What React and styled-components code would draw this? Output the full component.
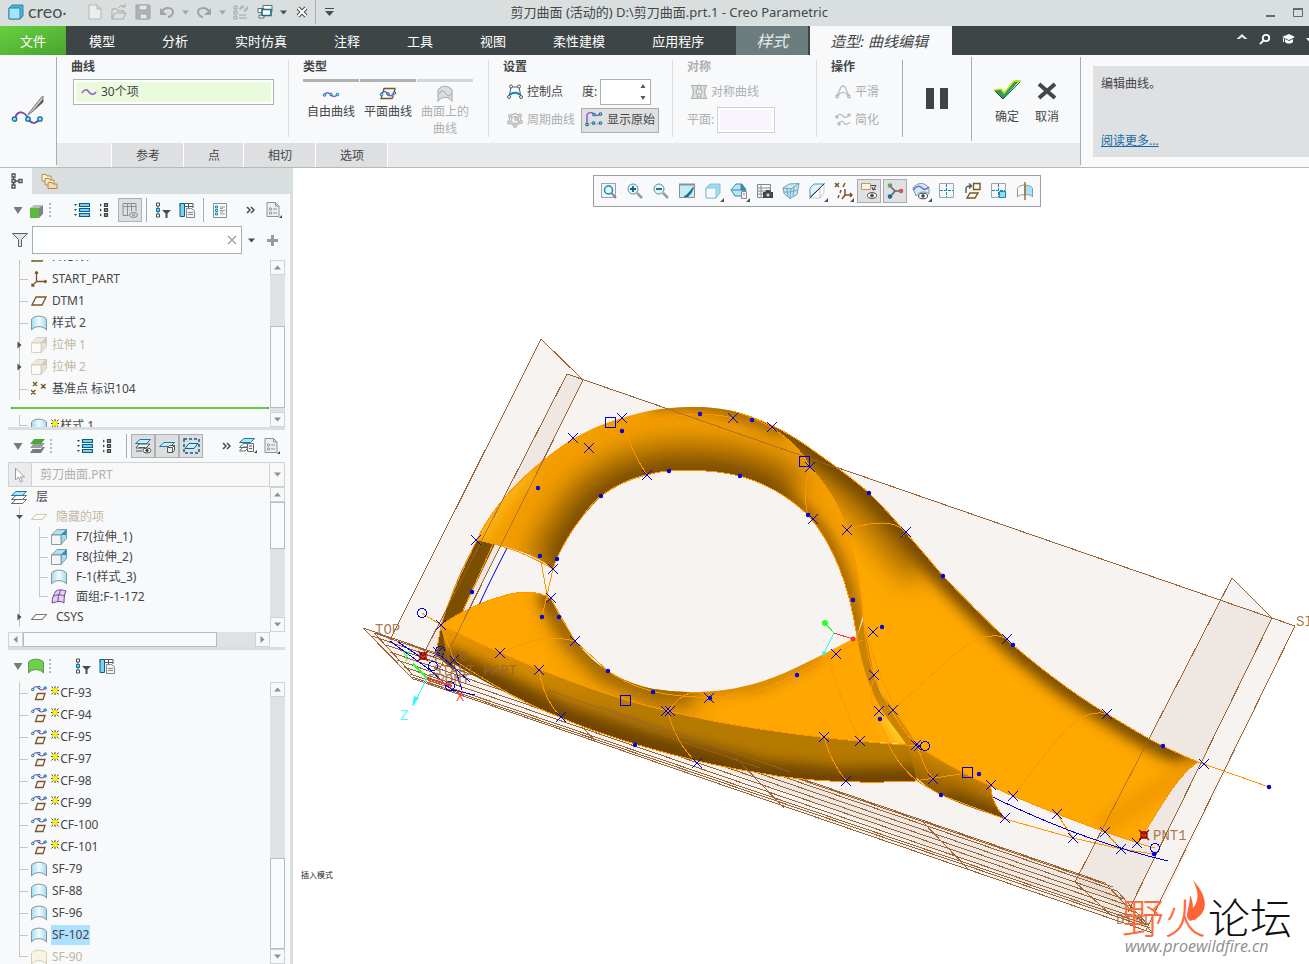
import React from "react";
import styled, { createGlobalStyle, css } from "styled-components";

const colors = {
  chrome: "#d9dfde",
  dark: "#3d4546",
  panel: "#f8f9fb",
  text: "#444648",
  muted: "#adafb0",
  hidden: "#c2b8a2",
  line: "#b4b8b8",
  guide: "#c4c6c8",
  datum: "#9a6434",
  orange: "#ff9600",
  blue: "#0000d8",
};

const GlobalStyle = createGlobalStyle`
  * {
    box-sizing: border-box;
  }
  body {
    margin: 0;
    overflow: hidden;
    background: #fff;
    color: ${colors.text};
    font: 12px/16px "Noto Sans", "Noto Sans CJK SC", sans-serif;
  }
  button, input, select {
    font: inherit;
    color: inherit;
    margin: 0;
    padding: 0;
    border: 0;
    background: none;
    border-radius: 0;
    outline: 0;
  }
  svg {
    display: block;
    flex: none;
  }
  ul {
    list-style: none;
    margin: 0;
    padding: 0;
  }
`;

/* ---------- layout ---------- */

const Page = styled.div`
  display: flex;
  flex-direction: column;
  height: 100vh;
`;

const TitleBar = styled.header`
  display: grid;
  grid-template-columns: 39% 1fr auto;
  align-items: center;
  height: 26px;
  background: ${colors.chrome};
`;

const QuickAccess = styled.div`
  display: flex;
  align-items: center;
  gap: 2px;
  height: 26px;
  padding-left: 8px;
  padding-bottom: 2px;
`;

const Brand = styled.span`
  width: 56px;
  padding: 0 2px 2px;
  font: 18px/22px Lato, sans-serif;
  color: #4a5052;
`;

const IconButton = styled.button`
  display: flex;
  align-items: center;
  justify-content: center;
  width: 22px;
  height: 24px;
`;

const DropButton = styled(IconButton)`
  width: 11px;
`;

const Divider = styled.i`
  width: 1px;
  height: ${(p) => p.$h || 24}px;
  background: #a9adad;
`;

const Title = styled.h1`
  margin: 0;
  padding-bottom: 2px;
  font-size: 13px;
  font-weight: 400;
`;

const WindowButtons = styled.div`
  display: flex;
  gap: 18px;
  padding: 0 6px 2px 0;
`;

const TabBar = styled.nav`
  display: flex;
  height: 29px;
  gap: 1px;
  background: ${colors.dark};
`;

const Tab = styled.button`
  padding: 0 23px;
  font-size: 13px;
  color: #fff;
  white-space: nowrap;
  ${(p) =>
    p.$kind === "file" &&
    css`
      padding: 0 20px;
      margin-right: -1px;
      background: linear-gradient(160deg, #66d13f, #4ba32f);
    `}
  ${(p) =>
    p.$kind === "context" &&
    css`
      margin-left: 8px;
      margin-right: 1px;
      padding: 0 20px;
      font-size: 16px;
      font-style: italic;
      color: #e4eaea;
      background: #6c7d7f;
    `}
  ${(p) =>
    p.$kind === "active" &&
    css`
      padding: 0 24px 0 20px;
      font-size: 15px;
      font-style: italic;
      color: ${colors.text};
      background: ${colors.panel};
    `}
`;

const TabTools = styled.div`
  display: flex;
  align-items: center;
  gap: 11px;
  height: 26px;
  margin-left: auto;
  margin-right: -4px;
`;

const Ribbon = styled.section`
  display: flex;
  height: 113px;
  background: ${colors.panel};
  border-bottom: 1px solid #b2bcbb;
`;

const FeatureMark = styled.div`
  display: flex;
  justify-content: center;
  align-items: center;
  width: 57px;
  margin: 2px 0;
  border-right: 1px solid #a9adad;
`;

const Dashboard = styled.div`
  display: flex;
  flex-direction: column;
`;

const Groups = styled.div`
  display: flex;
  height: 88px;
`;

const Group = styled.div`
  position: relative;
  width: ${(p) => p.$w}px;
  padding: 4px 0 0 14px;
  color: ${(p) => (p.$off ? colors.muted : colors.text)};
  &::after {
    content: "";
    position: absolute;
    right: 0;
    top: 5px;
    bottom: 6px;
    width: 1px;
    background: ${(p) => (p.$strong ? "#a9adad" : "#dcdee0")};
  }
`;

const GroupTitle = styled.h2`
  margin: 0 0 4px;
  font-size: 12px;
  line-height: 16px;
  font-weight: 700;
`;

const Collector = styled.button`
  display: flex;
  align-items: center;
  gap: 4px;
  width: 201px;
  height: 26px;
  margin-left: 2px;
  padding-left: 7px;
  border: 1px solid #b0b2b2;
  background: #e9fbdc;
  box-shadow: inset 0 0 0 2px #fff;
`;

const TypeRow = styled.div`
  display: flex;
  gap: 1px;
`;

const TypeButton = styled.button`
  display: flex;
  flex-direction: column;
  align-items: center;
  width: 56px;
  padding-top: 3px;
  line-height: 17px;
  white-space: nowrap;
  border-top: 3px solid ${(p) => (p.disabled ? "#d4d5d6" : "#b2b2b2")};
  color: ${(p) => (p.disabled ? colors.muted : colors.text)};
`;

const FieldRow = styled.div`
  display: flex;
  align-items: center;
  gap: 2px;
  height: 26px;
  margin-bottom: 2px;
  white-space: nowrap;
`;

const ToolButton = styled.button`
  display: flex;
  align-items: center;
  gap: 4px;
  height: 25px;
  padding: 0 3px;
  border: 1px solid ${(p) => (p.$on ? "#a9abad" : "transparent")};
  background: ${(p) => (p.$on ? "#dfe0e2" : "none")};
  color: ${(p) => (p.disabled ? colors.muted : colors.text)};
`;

const DegreeLabel = styled.label`
  display: flex;
  align-items: center;
  gap: 3px;
  margin-left: 13px;
`;

const Spinner = styled.span`
  display: flex;
  width: 51px;
  height: 26px;
  background: #fff;
  border: 1px solid #b0b2b2;
  input {
    width: 34px;
  }
`;

const PlaneLabel = styled.label`
  display: flex;
  align-items: center;
  gap: 3px;
  input {
    width: 58px;
    height: 26px;
    border: 1px solid #cfd0d2;
    background: #f9f5fd;
    box-shadow: inset 0 0 0 2px #fff;
  }
`;

const ActionCell = styled.div`
  display: flex;
  align-items: center;
  justify-content: center;
  gap: 14px;
  width: ${(p) => p.$w}px;
  margin: 2px 0;
  border-right: ${(p) => (p.$last ? 0 : "1px solid #a9adad")};
`;

const ActionButton = styled.button`
  display: flex;
  flex-direction: column;
  align-items: center;
  gap: 6px;
  padding-top: 6px;
`;

const SubTabs = styled.div`
  display: flex;
  gap: 1px;
  height: 24px;
  background: #e8e9eb;
`;

const SubTab = styled.button`
  width: ${(p) => p.$w}px;
  padding: 2px 0 0 1px;
  background: ${(p) => (p.$blank ? "#e8e9eb" : "#dedfe1")};
  box-shadow: 1px 0 #fff;
`;

const Help = styled.aside`
  flex: 1;
  display: flex;
  padding: 11px 0 10px 12px;
  &::before {
    content: "";
    width: 1px;
    margin: -9px 0 -8px -12px;
    background: #a9adad;
  }
`;

const HelpText = styled.div`
  flex: 1;
  display: flex;
  flex-direction: column;
  justify-content: space-between;
  margin-left: 12px;
  padding: 10px 8px 8px;
  background: #dfe0e2;
  a {
    color: #1568a8;
  }
`;

const Work = styled.div`
  display: flex;
  flex: 1;
  min-height: 0;
`;

const Sidebar = styled.aside`
  display: flex;
  flex-direction: column;
  width: 293px;
  flex: none;
  background: #f7fafb;
  border-right: 3px solid ${colors.chrome};
`;

const SideTabs = styled.div`
  display: flex;
  flex: none;
  height: 26px;
  background: ${colors.chrome};
`;

const SideTab = styled.button`
  display: flex;
  align-items: center;
  justify-content: center;
  width: 32px;
  padding-left: 2px;
  background: ${(p) => (p.$on ? "#f7fafb" : "none")};
`;

const SideTools = styled.div`
  display: flex;
  align-items: center;
  flex: none;
  height: 32px;
  padding-left: 13px;
`;

const SideTool = styled.button`
  display: flex;
  align-items: center;
  justify-content: center;
  width: ${(p) => p.$w || 24}px;
  height: 24px;
  margin-left: ${(p) => p.$gap || 0}px;
  border: ${(p) => (p.$on ? "1px solid #aeb0b2" : 0)};
  background: ${(p) => (p.$on ? "#dcdee0" : "none")};
  font-size: 16px;
`;

const Filter = styled.div`
  display: flex;
  align-items: center;
  height: 28px;
  flex: none;
  margin-bottom: 6px;
  padding-left: 12px;
  gap: 4px;
`;

const FilterBox = styled.div`
  display: flex;
  align-items: center;
  width: 210px;
  height: 28px;
  padding-right: 4px;
  border: 1px solid #a3afb1;
  background: #fff;
  input {
    flex: 1;
    min-width: 0;
  }
`;

const Section = styled.section`
  display: flex;
  flex: ${(p) => (p.$h ? `0 0 ${p.$h}px` : "1")};
  min-height: 0;
  margin: 0 5px 0 8px;
  background: ${colors.panel};
`;

const Tree = styled.ul`
  flex: 1;
  min-width: 0;
  overflow: hidden;
  margin-right: 1px;
`;

const TreeInner = styled.div`
  margin-top: ${(p) => -p.$scroll}px;
`;

const Row = styled.li`
  display: flex;
  align-items: center;
  height: ${(p) => p.$h || 22}px;
  padding-left: ${(p) => (p.$root ? 3 : 11)}px;
  white-space: nowrap;
  color: ${(p) => (p.$hidden ? colors.hidden : colors.text)};
`;

const Guide = styled.i`
  position: relative;
  width: ${(p) => p.$w || 12}px;
  height: ${(p) => (p.$end ? "50%" : "100%")};
  align-self: flex-start;
  border-left: 1px solid ${colors.guide};
  background: ${(p) =>
    p.$tick || p.$end
      ? `linear-gradient(${colors.guide}, ${colors.guide}) 0 ${p.$end ? "100%" : "50%"} / 8px 1px no-repeat`
      : "none"};
  svg {
    position: absolute;
    left: -5px;
    top: 50%;
    margin-top: -5px;
  }
`;

const Label = styled.span`
  margin-left: ${(p) => p.$gap || 4}px;
  padding: 2px 1px;
  background: ${(p) => (p.$selected ? "#aee0ff" : "none")};
`;

const FreshMark = styled.span`
  align-self: flex-start;
  padding: 4px 0 0 4px;
`;

const InsertLine = styled.li`
  display: flex;
  align-items: center;
  height: 15px;
  margin-left: 3px;
  &::before {
    content: "";
    flex: 1;
    height: 2px;
    background: #67c84a;
    border: solid #4fae33;
    border-width: 0 2px;
  }
`;

const ScrollTrack = styled.div`
  display: flex;
  flex-direction: ${(p) => (p.$horizontal ? "row" : "column")};
  ${(p) => (p.$horizontal ? "height: 15px; flex: 1;" : "width: 15px;")}
  flex-shrink: 0;
  background: #dfe1e3;
`;

const ScrollEnd = styled.button`
  display: flex;
  flex: 0 0 15px;
  align-items: center;
  justify-content: center;
  border: 1px solid #d0d2d4;
  background: #f7f8f9;
`;

const ScrollThumb = styled.i`
  border: 1px solid #b9bbbd;
  background: #f9fafb;
  flex: ${(p) => p.$size} 0 0;
`;

const ScrollGap = styled.i`
  flex: ${(p) => p.$size} 0 0;
`;

const Splitter = styled.hr`
  width: 277px;
  height: 3px;
  flex: none;
  margin: 0 0 0 8px;
  border: 0;
  background: ${colors.chrome};
`;

const ModelPicker = styled.div`
  display: flex;
  flex: none;
  height: 25px;
  margin: 0 5px 0 8px;
  border: 1px solid #cfd1d3;
  background: #f8f8f9;
`;

const PickArrow = styled.button`
  display: flex;
  align-items: center;
  justify-content: center;
  width: 23px;
  background: #eaebed;
  border-right: 1px solid #cfd1d3;
`;

const PickerSelect = styled.select`
  flex: 1;
  appearance: none;
  padding-left: 8px;
  color: ${colors.muted};
  opacity: 1;
`;

const PickCaret = styled.span`
  display: flex;
  align-items: center;
  justify-content: center;
  width: 15px;
  border-left: 1px solid #cfd1d3;
`;

const HScrollRow = styled.div`
  display: flex;
  flex: none;
  margin: 0 20px 0 8px;
`;

const Viewport = styled.main`
  position: relative;
  flex: 1;
  min-width: 0;
  overflow: hidden;
  background: #fff;
`;

const Model = styled.svg`
  width: 100%;
  height: 100%;
`;

const GraphicsBar = styled.div`
  position: absolute;
  top: 7px;
  left: 300px;
  display: flex;
  align-items: center;
  height: 32px;
  padding: 0 2px;
  border: 1px solid #9c9fa1;
  background: ${colors.panel};
`;

const GraphicsButton = styled.button`
  position: relative;
  display: flex;
  align-items: center;
  justify-content: center;
  width: 24px;
  height: 24px;
  margin: 0 1px;
  border: 1px solid ${(p) => (p.$on ? "#a9abad" : "transparent")};
  background: ${(p) => (p.$on ? "#dfe0e2" : "none")};
  &::after {
    content: "";
    display: ${(p) => (p.$more ? "block" : "none")};
    position: absolute;
    right: 0;
    bottom: 0;
    border: 2px solid transparent;
    border-right-color: #555;
    border-bottom-color: #555;
  }
`;

/* ---------- icons ---------- */

const Svg = ({ w = 16, h = w, children, ...rest }) => (
  <svg
    width={w}
    height={h}
    viewBox={`0 0 ${w} ${h}`}
    fill="none"
    stroke="#666a6c"
    aria-hidden="true"
    {...rest}
  >
    {children}
  </svg>
);

const Caret = ({ color = "#4a4d4f", dir = "down" }) => {
  const turn = { down: 0, left: 90, up: 180, right: 270 }[dir];
  return (
    <Svg w={9} stroke="none" fill={color}>
      <path d="M1 2.500h7L4.500 6.500z" transform={`rotate(${turn} 4.5 4.5)`} />
    </Svg>
  );
};

const SectionCaret = () => (
  <Svg w={10} h={9} stroke="none" fill="#77797b">
    <path d="M.5 1h9L5 8z" />
  </Svg>
);

const Chevrons = () => (
  <Svg w={9} h={8} stroke="#4a4d4f" strokeWidth="1.500">
    <path d="m1 1 3 3-3 3M5 1l3 3-3 3" />
  </Svg>
);

const Wave = ({ w = 16, color = "#9258c8", dots = true }) => (
  <Svg w={w} h={8} stroke={color} strokeWidth="1.500">
    <path d="M1 5C3 1 6 1 8 4s5 3 7 0" />
    {dots && (
      <g stroke="#0d7ea8" strokeWidth="1" fill="#9be0fa">
        <circle cx="2" cy="5" r="1.300" />
        <circle cx="8" cy="4" r="1.300" />
        <circle cx="14" cy="4" r="1.300" />
      </g>
    )}
  </Svg>
);

const Surface = ({ fill = "url(#sheet)", edge = "#8b9398" }) => (
  <Svg stroke={edge}>
    <path d="M.5 4C4 .2 12 .2 15.500 4v11C12 10.500 4 10.500 .5 15z" fill={fill} />
  </Svg>
);

const Block = ({ faded }) => (
  <Svg stroke={faded ? "#cfc9b8" : "#6f8792"} strokeWidth=".8">
    <path d="M6 .5h9.500L10 6H.5z" fill={faded ? "#ebe8de" : "#b0dff2"} />
    <path d="M15.500 .5v9L10 15.500V6z" fill={faded ? "#e6e2d4" : "#a9dbef"} />
    <path d="M15.500 .5v5.500L10 6z" fill={faded ? "#cfc8b4" : "#2f8fbb"} stroke="none" />
    <path d="M.5 6H10v9.500H.5z" fill={faded ? "#fcfbf5" : "#f4f5f6"} />
  </Svg>
);

const Plane = ({ color = "#7a5525", fill = "none" }) => (
  <Svg stroke={color} strokeWidth="1.300">
    <path d="M5 4h10l-4 8H1z" fill={fill} />
  </Svg>
);

const FlatPlane = ({ color = "#77797b" }) => (
  <Svg stroke={color} strokeWidth="1.100">
    <path d="M5 5.500h10.500l-4.500 5H.5z" fill="#fdfdf9" />
  </Svg>
);

const Csys = () => (
  <Svg stroke="#7a5525" strokeWidth="1.300">
    <path d="M5.500 0v10.500h10M5.500 10.500 1 15M4 2.500 5.500 .5 7 2.500M13.500 9l2 1.500-2 1.500M1 12.500V15h2.500" />
  </Svg>
);

const Points = () => (
  <Svg stroke="#7a5525" strokeWidth="1.400">
    <path d="m2 1 4 4m0-4L2 5m8-2 4.500 4.500m0-4.500L10 7.500M0 9l4.500 4.500m0-4.500L0 13.500" />
  </Svg>
);

const Star = () => (
  <Svg w={8} h={9} stroke="#444" strokeWidth="1">
    <path d="M4 0v9M0 4.500h8M.5 .5l7 8M7.500 .5l-7 8" />
    <path d="M2 2.500h4v4H2z" fill="#fff200" stroke="#f0e400" />
  </Svg>
);

const CurveOnPlane = () => (
  <Svg stroke="#7a5525" strokeWidth="1.300">
    <path d="M6.500 8.500H14L12 14.500H4.500z" />
    <path d="M2 4c2-3.500 5-2.500 6-.5s4 2 6-.5" stroke="#9258c8" />
    <g stroke="#0d6f98" strokeWidth="1" fill="#bfeafd">
      <circle cx="1.700" cy="4.500" r="1.200" />
      <circle cx="8" cy="2.500" r="1.200" />
      <circle cx="14.200" cy="3" r="1.200" />
    </g>
  </Svg>
);

const Quilt = () => (
  <Svg stroke="#6a4292" strokeWidth="1">
    <path d="M5 2c4-2 7-1 10 0-2 4-2 8-2 12-4-3-8-1-12 0 0-5 2-9 4-12z" fill="#e3d3f4" />
    <path d="M10 1C7 6 7 9 7 13M3 7c4-2 8-1 11 0" />
  </Svg>
);

const Layers = ({ top = "#aee4fa", rest = "#fdfdfd" }) => (
  <Svg stroke="#666a6c" strokeWidth="1">
    <path d="M5 10.500h10.500l-4 4H.5z" fill={rest} />
    <path d="M5 6.500h10.500l-4 4H.5z" fill={rest} />
    <path d="M5 2.500h10.500l-4 4H.5z" fill={top} stroke="#1f7b9e" />
  </Svg>
);

const ModelTreeMark = () => (
  <Svg w={14} h={16} stroke="#4a4d4f" strokeWidth="1.300">
    <path d="M2 1h3v3H2zM2 6.500h3v3H2zM2 12h3v3H2zM9 6.500h3v3H9zM3.500 4v2.500m0 3V12M5 8h4" />
  </Svg>
);

const Folders = () => (
  <Svg w={17} stroke="#b58a4c">
    <path d="M1 1.500h4l1 1.500h4v5H1z" fill="#fbf0da" />
    <path d="M4 5.500h4L9 7h4v5H4z" fill="#f9e6c4" />
    <path d="M7 9.500h4l1 1.500h4v4.500H7z" fill="#f5dbae" />
  </Svg>
);

const GreenCube = () => (
  <Svg w={15} stroke="none">
    <path d="M1 5h9v10H1z" fill="#5cb93c" />
    <path d="M1 5l4-3h9l-4 3z" fill="#b9bcbd" />
    <path d="M10 5l4-3v9l-4 4z" fill="#7f8486" />
  </Svg>
);

const Grip = () => (
  <Svg w={4} h={16} stroke="#a0a4a6" strokeWidth="1.500">
    <path d="M2 1v14" strokeDasharray="2 2" />
  </Svg>
);

const ExpandAll = () => (
  <Svg w={16} stroke="#0b5f86" strokeWidth="1.200">
    <path d="M5.500 1.500h10v3h-10zM5.500 6.500h10v3h-10zM5.500 11.500h10v3h-10z" fill="#7fd0f2" />
    <path d="M0 2h3L1.500 4zM0 7h3L1.500 9zM0 12h3l-1.500 2z" fill="#444" stroke="none" />
  </Svg>
);

const CollapseAll = () => (
  <Svg w={10} h={16} stroke="#444" strokeWidth="1.200">
    <path d="M5.500 1.500h3v3h-3zM5.500 6.500h3v3h-3zM5.500 11.500h3v3h-3z" fill="#8a8d8f" />
    <path d="M1 1.500v3L3 3zM1 6.500v3L3 8zM1 11.500v3L3 13z" fill="#444" stroke="none" />
  </Svg>
);

const Columns = () => (
  <Svg stroke="#8a8e90">
    <path d="M1 1.500h13v3H1zM1 4.500v9h5.500M5.500 1.500v12M9.500 1.500v8M14 4.500v5" />
    <ellipse cx="11.500" cy="13" rx="4" ry="2.500" fill="#dcdee0" />
    <circle cx="11.500" cy="13" r="1" />
  </Svg>
);

const TreeFilter = () => (
  <Svg w={16} h={16} stroke="#4a4d4f">
    <path d="M1.500 1h3v3h-3zM1.500 12h3v3h-3zM3 4v2.500m0 3V12" />
    <path d="M1.500 6.500h3v3h-3z" stroke="#0b6f98" fill="#7fd0f2" />
    <path d="M7 8h9l-3.500 3.500V16h-2v-4.500z" fill="#4a4d4f" stroke="none" />
  </Svg>
);

const TreeColumns = () => (
  <Svg stroke="#55595b">
    <path d="M1 1.500h13v3H1zM9.500 1.500V6M14 4.500V6" />
    <path d="M1 1.500h4.500v13H1z" stroke="#0b5f86" fill="#7fd0f2" />
    <path d="M7.500 6.500h5l3 2.500v6.500h-8z" fill="#f4f4f4" stroke="#85898b" />
    <path d="M9 10.500h5M9 12.500h5" stroke="#85898b" />
  </Svg>
);

const TreeList = () => (
  <Svg w={15} stroke="#8a8e90">
    <path d="M.5 .5h13v14H.5z" />
    <path d="M7 4h5M7 7.500h5M7 11h5M7 5.500h3M7 9h3" strokeWidth=".9" />
    <path d="M2.500 3h2v2h-2zM2.500 6.500h2v2h-2zM2.500 10h2v2h-2z" stroke="#0b8ab8" />
  </Svg>
);

const Sheet = () => (
  <Svg w={16} h={18} stroke="#8e9294">
    <path d="M1 1.500h8.500L13 5v10.500H1z" fill="#eceef0" />
    <path d="M9.500 1.500V5H13M7 8h4M7 12h4" />
    <circle cx="4.500" cy="8" r="1.200" />
    <circle cx="4.500" cy="12" r="1.200" />
    <path d="M16 14v3h-3z" fill="#444" stroke="none" />
  </Svg>
);

const LayerSheet = () => (
  <Svg w={18} stroke="#666a6c">
    <path d="M4 10h6l-4 4H.5zM4 6.500h8l-4 4H.5z" fill="#fff" />
    <path d="M5 1.500h10.500l-4 4H.5z" fill="#aee4fa" stroke="#1f7b9e" />
    <path d="M8.500 6.500h6v8h-6zM10 9h3M10 11.500h3" fill="#eee" />
    <path d="M18 13v3h-3z" fill="#444" stroke="none" />
  </Svg>
);

const Funnel = () => (
  <Svg w={16} stroke="#5b6062">
    <path d="M.5 1.500h15l-6 6v7h-3v-7z" fill="#dfe3e5" />
  </Svg>
);

const LayerEye = () => (
  <Svg w={17} stroke="#555">
    <path d="M4 9.500h6M4 6h11l-4 4H1zM1 13h6" fill="#f2f2f2" />
    <path d="M5 1.500h10.500l-4 4H.5z" fill="#c9edfb" stroke="#1f7b9e" />
    <ellipse cx="12" cy="12.500" rx="4" ry="2.500" fill="#fff" />
    <circle cx="12" cy="12.500" r="1.300" fill="#333" />
  </Svg>
);

const LayerBox = () => (
  <Svg w={17} stroke="#555">
    <path d="M5 4.500h10.500l-4 4H.5z" fill="#c9edfb" stroke="#1f7b9e" />
    <path d="M8.500 9.500h5v5h-5zM8.500 9.500l2-2h5v5l-2 2M13.500 9.500l2-2" fill="#eee" />
  </Svg>
);

const LayerIsolate = () => (
  <Svg w={17} stroke="#0b5f86">
    <path d="M1 1h15v14H1z" strokeDasharray="3 2" strokeWidth="1.500" />
    <path d="M6 5.500h9l-4 5H2z" fill="#c9edfb" />
  </Svg>
);

const ExpandMark = ({ open }) => (
  <svg width="10" height="10" viewBox="0 0 10 10" fill="#4a4d4f" aria-hidden="true">
    <path d={open ? "M1 3h7L4.500 7z" : "M2.500 1.500v7l4-3.500z"} />
  </svg>
);

const ControlPoints = () => (
  <Svg stroke="#55595b">
    <path d="M4 3h8l2 10M4 3 2 13" />
    <path d="M3 11c2-3 8-3 10 0" stroke="#0d88c0" strokeWidth="2" />
    <g fill="#fff">
      <circle cx="4" cy="2.500" r="1.500" />
      <circle cx="12" cy="2.500" r="1.500" />
      <circle cx="2" cy="13" r="1.500" />
      <circle cx="14" cy="13" r="1.500" />
    </g>
  </Svg>
);

const Periodic = () => (
  <Svg stroke="#b5b7b8" strokeWidth="1.200">
    <path d="M3 4 8 1.500 13 4l1 6-6 4.500L2 10z" />
    <circle cx="8" cy="8" r="3.500" />
    <g fill="#eee">
      <circle cx="3" cy="4" r="1.400" />
      <circle cx="13" cy="3.500" r="1.400" />
      <circle cx="14" cy="10" r="1.400" />
      <circle cx="8" cy="14" r="1.400" />
      <circle cx="2" cy="10.500" r="1.400" />
      <circle cx="9" cy="7" r="1.400" />
    </g>
  </Svg>
);

const ShowOriginal = () => (
  <Svg w={18} stroke="#9258c8" strokeWidth="1.500">
    <path d="M2 13V4c1-3 5-3 7-1s4 2 6 0" />
    <path d="M3 14c4-5 8 2 12-3" stroke="#b0b3b5" strokeDasharray="2 1" />
    <g stroke="#0d6f98" strokeWidth="1.100" fill="#bfeafd">
      <circle cx="2" cy="13.500" r="1.300" />
      <circle cx="9" cy="3.500" r="1.300" />
      <circle cx="15.500" cy="3" r="1.300" />
      <circle cx="8.500" cy="12" r="1.300" />
      <circle cx="15.500" cy="12" r="1.300" />
    </g>
  </Svg>
);

const Mirror = () => (
  <Svg stroke="#b0b2b3" strokeWidth="1.200">
    <path d="M.5 1.500h6v3L5 8l1.500 3v3.500h-6C3 10 3 6 .5 1.500zM15.500 1.500h-6v3L11 8l-1.500 3v3.500h6C13 10 13 6 15.500 1.500z" fill="#dcdddd" />
    <path d="M8 0v16" strokeDasharray="3 1" />
  </Svg>
);

const Smooth = () => (
  <Svg stroke="#b5b7b8" strokeWidth="1.200">
    <path d="M2 12 6 3q2-2 4 0l4 9M3 12c3-5 7-5 10 0" />
    <circle cx="2" cy="12.500" r="1.300" />
    <circle cx="14" cy="12.500" r="1.300" />
  </Svg>
);

const Simplify = () => (
  <Svg stroke="#b5b7b8" strokeWidth="1.200">
    <path d="M1 5c3-4 5-3 7-1s4 2 6-1M3 12c3-4 5-3 6-1s4 2 6-1" />
    <circle cx="2" cy="5" r="1.200" />
    <circle cx="14" cy="3" r="1.200" />
    <circle cx="4" cy="12" r="1.200" />
  </Svg>
);

const StyleMark = () => (
  <Svg w={34} h={34} stroke="#7a4bb0" strokeWidth="2">
    <path d="M4 24c3-8 9-7 13 0 3 6 8 7 12 0" />
    <path d="M18 19 29 5l3-3v6L21 18l-4 3z" fill="#c9c9c9" stroke="#77797b" strokeWidth="1" />
    <path d="M21 18 32 5v3L21 18z" fill="#6a4a30" stroke="none" />
    <g stroke="#0d6f98" strokeWidth="1.300" fill="#9be0fa">
      <circle cx="3.500" cy="25" r="2.200" />
      <circle cx="17" cy="25" r="2.200" />
      <circle cx="29" cy="25" r="2.200" />
    </g>
  </Svg>
);

const FreeCurve = () => (
  <Svg w={18} h={18} stroke="#9258c8" strokeWidth="1.500">
    <path d="M2 10c3-4 5-2 7 0s4 2 6 0" />
    <g stroke="#0d7ea8" strokeWidth="1" fill="#9be0fa">
      <circle cx="2.500" cy="10" r="1.300" />
      <circle cx="9" cy="9.500" r="1.300" />
      <circle cx="15.500" cy="9.500" r="1.300" />
    </g>
  </Svg>
);

const PlanarCurve = () => (
  <Svg w={18} h={18} stroke="#7a5525" strokeWidth="1.300">
    <path d="M4 7.500 5 3.500h11L15 8M3 10.500l-1 3h11l1.500-3" />
    <path d="M2 10c2-5 5-4 7-1s4 2 6-1" stroke="#9258c8" strokeWidth="1.600" />
    <g stroke="#0d6f98" strokeWidth="1" fill="#9be0fa">
      <circle cx="2.500" cy="9.500" r="1.300" />
      <circle cx="9" cy="9" r="1.300" />
      <circle cx="15.500" cy="8" r="1.300" />
    </g>
  </Svg>
);

const CurveOnSurface = () => (
  <Svg w={18} h={18} stroke="#b0b2b3" strokeWidth="1.200">
    <path d="M2 5c4-5 10-5 14 0v11c-4-5-10-5-14 0z" fill="#dcddde" />
    <path d="M3 9c3-5 5-3 7 0s4 2 6-1" />
  </Svg>
);

const graphics = [
  ["重新调整", <Svg key="i" w={18} h={18}><path d="M1.500 1.500h14v14h-14z" stroke="#9ea2a4" fill="#f2f5f6" /><circle cx="8.500" cy="8" r="4" stroke="#168ab5" strokeWidth="1.500" fill="#e8f8fe" /><path d="m11.500 11 4.500 5" stroke="#888" strokeWidth="2" /></Svg>],
  ["放大", <Svg key="i" w={18} h={18}><circle cx="7" cy="7" r="5" stroke="#5c8fa5" fill="#e4f5fc" /><path d="M4 7h6M7 4v6" stroke="#12638a" strokeWidth="1.800" /><path d="m11 11 5 5" stroke="#989b9d" strokeWidth="2.500" /></Svg>],
  ["缩小", <Svg key="i" w={18} h={18}><circle cx="7" cy="7" r="5" stroke="#5c8fa5" fill="#e4f5fc" /><path d="M4 7h6" stroke="#12638a" strokeWidth="1.800" /><path d="m11 11 5 5" stroke="#989b9d" strokeWidth="2.500" /></Svg>],
  ["重画", <Svg key="i" w={18} h={18}><path d="M1.500 2.500h15v13h-15z" fill="#c6ebf8" stroke="#8c9092" /><path d="M15 5c-4 5-6 8-9 9v1h4c3-3 5-6 6-10z" fill="#206f93" stroke="none" /><path d="M1 2.500h16" stroke="#8c9092" strokeWidth="2" /></Svg>],
  ["显示样式", <Svg key="i" w={18} h={18} stroke="#8fc0d2"><path d="m2 6 4-4h10v9l-4 5H2z" fill="#9bdcf5" /><path d="M2 6h10v10H2z" fill="#f3fbfe" /></Svg>, 0, 1],
  ["已保存方向", <Svg key="i" w={18} h={18} stroke="#3b89a8"><path d="M1 8 6 2h6l4 6-4 6H5z" fill="#b5e5f7" /><path d="M1 8h15" /><path d="M11 2v6h5z" fill="#3b89a8" /><path d="M11.500 9.500h5v7h-5zM13 12h2" fill="#f3f3f3" stroke="#888" /></Svg>, 0, 1],
  ["视图管理器", <Svg key="i" w={18} h={18}><path d="M1.500 2.500h13v13h-13zM1.500 6h13M1.500 9h8M1.500 12h6M5 2.500v13" stroke="#85898b" /><path d="M7 10h2l1-2h4l1 2h2v6H7z" fill="#444" stroke="none" /><circle cx="12" cy="13" r="1.800" fill="#ddd" /></Svg>],
  ["透视图", <Svg key="i" w={18} h={18} stroke="#6fa3b8"><path d="m1 6 6-4 10-.5-2 11-7 4-6-5z" fill="#c4e8f5" /><path d="m1 6 8 1 8-5.500M9 7l-1 9.500M5 6.500l1 8M12 5l-1 9M2 10h6l8-2" /></Svg>],
  ["截面", <Svg key="i" w={18} h={18} stroke="#4b9cbd"><path d="M2 15V6l4-4h10L2 15" fill="#e2f5fc" /><path d="M16 3v8l-4 5H3M12 7v9" stroke="#aaa" strokeDasharray="1.500 1" /><path d="M1.500 16.500 16.500 1.500" stroke="#333" /></Svg>, 0, 1],
  ["基准显示过滤器", <Svg key="i" w={20} h={18} stroke="#7a5525" strokeWidth="1.500"><path d="m2 1 4 4m0-4L2 5m10-4-2 4M8 8l-1 3m-1 2-1 3" /><path d="M12 7v6h6m-6 0-3 4M17 11l2 2-2 2" /></Svg>, 0, 1],
  ["注释显示", <Svg key="i" w={18} h={18}><path d="M1.500 1.500h9v6h-9z" fill="#fdf1d8" stroke="#b49c74" /><path d="M11 3.500h5L13 8m-1-3 1 3 3-1" stroke="#444" /><ellipse cx="12" cy="13.500" rx="4.500" ry="2.800" fill="#fff" stroke="#444" /><circle cx="12" cy="13.500" r="1.500" fill="#333" /></Svg>, 1],
  ["旋转中心", <Svg key="i" w={18} h={18}><path d="M4 4 9 9h6M9 9l-5 6" stroke="#5d6163" strokeWidth="1.500" /><circle cx="4" cy="3.500" r="2.300" fill="#5da35a" stroke="none" /><circle cx="15" cy="9" r="2.300" fill="#cf5550" stroke="none" /><circle cx="4" cy="14.500" r="2.300" fill="#1c6c9c" stroke="none" /></Svg>, 1],
  ["样式显示", <Svg key="i" w={18} h={18}><path d="M1 6c4-6 12-6 16 0v6c-4-3-10-3-13 2z" fill="#c9edfb" stroke="#7d9ba8" /><path d="M1 8c4-5 7-4 9-2s4 2 7-1" stroke="#9258c8" strokeWidth="1.500" /><ellipse cx="11" cy="14" rx="4.500" ry="2.800" fill="#fff" stroke="#444" /><circle cx="11" cy="14" r="1.400" fill="#333" /></Svg>, 0, 1],
  ["活动平面", <Svg key="i" w={18} h={18}><path d="M1.500 1.500h14v14h-14z" stroke="#a2a5a7" fill="#f5f7f8" /><path d="M2 8.500h13M8.500 2v13" stroke="#168ab5" strokeDasharray="3 1" /></Svg>],
  ["平面方向", <Svg key="i" w={18} h={18} stroke="#7a5525" strokeWidth="1.400"><path d="M9.500 1.500h6.500v6H9.500zM6 11h8l-3 5H3z" fill="#fffdf5" /><path d="M2 11V7c0-3 2-3 5-3M5 1.500 7.500 4 5 6.500" stroke="#555" /></Svg>],
  ["四视图", <Svg key="i" w={18} h={18}><path d="M1.500 1.500h14v14h-14z" stroke="#a2a5a7" fill="#f5f7f8" /><path d="M9.500 9.500h6v6h-6z" fill="#8edbf8" stroke="#168ab5" /><path d="M2 8.500h13M8.500 2v13" stroke="#168ab5" strokeDasharray="3 1" /></Svg>],
  ["镜像", <Svg key="i" w={18} h={18}><path d="M9 3C6 3 3 4 1.500 6v9C3 13 6 12 9 13z" fill="#fafafa" stroke="#999" /><path d="M9 3c3 0 6 1 7.500 3v9C15 13 12 12 9 13z" fill="#a6e1f8" stroke="#6ea4b8" /><path d="M9 0v18" stroke="#a3702c" strokeWidth="1.500" /></Svg>],
];

/* ---------- model drawing ---------- */

const crosses = [
  [622, 418], [573, 438], [589, 448], [647, 475], [476, 540], [553, 569], [551, 598],
  [441, 625], [438, 652], [500, 653], [539, 670], [561, 717], [575, 641], [454, 660],
  [733, 418], [772, 427], [810, 467], [813, 519], [847, 530], [906, 532], [873, 632],
  [836, 654], [874, 675], [879, 711], [893, 710], [666, 711], [670, 711], [709, 698],
  [824, 737], [860, 741], [846, 781], [697, 763], [916, 745], [919, 746], [933, 779],
  [991, 785], [1013, 796], [1005, 818], [1057, 814], [1073, 838], [1105, 832],
  [1121, 849], [1137, 843], [1107, 714], [1007, 639], [1204, 764],
];

const dots = [
  [700, 414], [752, 420], [622, 431], [538, 488], [669, 471], [601, 496], [540, 556],
  [557, 559], [472, 592], [542, 617], [559, 617], [608, 671], [653, 692], [635, 745],
  [740, 476], [808, 515], [869, 493], [943, 576], [853, 600], [882, 627], [797, 675],
  [710, 698], [880, 719], [979, 774], [941, 795], [1013, 645], [1163, 746],
  [1269, 787], [1154, 854],
];

const squares = [[610, 422], [804, 461], [625, 700], [967, 772]];
const circles = [[422, 613], [925, 746], [1155, 848], [433, 666], [440, 651], [450, 686]];

const lowerPlanes = [
  [363, 628, 1105, 883], [374, 633, 1113, 887], [372, 636, 1117, 891],
  [386, 645, 1124, 899], [390, 652, 1130, 906], [397, 660, 1137, 913],
  [404, 667, 1142, 920], [410, 674, 1148, 925], [412, 677, 1150, 928],
  [414, 679, 1153, 933],
];

const holeEdge =
  "M553 569C558 553 571 531 580 520 588 508 593 502 601 496 616 485 629 479 647 475 655 473 662 471 669 471 695 469 718 471 740 476 765 483 787 495 808 515 835 546 850 590 857 637";
const ringBelly =
  "M553 569C558 553 571 531 580 520 588 508 593 502 601 496 616 485 629 479 647 475 655 473 662 471 669 471 695 469 718 471 740 476 760 481 775 489 790 498";
const outerEdge =
  "M733 411C758 418 783 429 807 446 828 461 850 476 869 493 882 505 894 519 906 533 919 547 931 562 943 576 964 598 986 620 1007 640 1036 665 1072 693 1107 714 1126 725 1144 737 1163 746 1175 752 1186 757 1198 762";
const ridge = "C765 420 797 440 810 467 825 483 841 507 847 530 856 560 862 590 863 615 865 640 868 660 875 678 882 695 900 730 918 746";
const ringPath =
  "M477 540C482 528 490 515 505 497 516 484 528 472 541 462 552 453 562 445 573 439 588 430 604 423 622 418 642 412 660 407 695 407 710 407 722 409 733 411" +
  "C765 420 797 440 810 467 825 483 841 507 847 530 856 560 862 590 863 615L857 637" +
  "C850 590 835 546 808 515 787 495 765 483 740 476 718 471 695 469 669 471 629 474 605 490 590 508 571 529 560 548 553 569 540 556 508 546 477 540Z";
const bladePath =
  outerEdge +
  "C1176 776 1158 812 1138 843 1110 835 1080 822 1057 814L1013 796 991 786C965 774 940 761 918 746" +
  "C900 730 882 695 875 678 868 660 865 640 863 615 862 590 856 560 847 530 841 507 825 483 810 467 797 440 765 420 733 411Z";
const lowerTop =
  "M441 625C463 610 485 600 510 594 525 591 540 591 551 599 555 608 558 614 575 641 588 656 595 663 608 671 638 690 665 692 700 692 765 690 800 665 857 637" +
  "L872 690 906 744C830 740 735 728 668 711 600 695 530 668 441 625Z";
const lowerSide =
  "M441 625C530 668 600 695 668 711 735 728 830 740 908 745L917 781C860 784 800 781 760 773 690 763 600 735 562 718 530 706 480 680 448 660Z";
const tubePath =
  "M880 690 918 746C940 761 965 774 991 786 991 798 995 806 1005 819 985 812 960 804 941 795 925 786 912 775 905 765 900 750 890 710 880 690Z";

const StrokeText = styled.text`
  font: 14px "Liberation Mono", monospace;
  fill: ${(p) => p.$color || colors.datum};
  fill-opacity: 0.85;
  stroke: none;
`;

const LogoText = styled.text`
  font: 300 42px "Noto Sans CJK SC", sans-serif;
  fill: ${(p) => p.$color};
  stroke: none;
`;

const SiteText = styled.text`
  font: italic 16px "Open Sans", sans-serif;
  fill: #8d8d8d;
`;

const ModeText = styled.text`
  font: 8px "Noto Sans CJK SC", sans-serif;
  fill: #222;
`;

const Shaded = ({ id, d, base, children }) => (
  <g>
    <clipPath id={id}>
      <path d={d} />
    </clipPath>
    <path d={d} fill={base} />
    <g clipPath={`url(#${id})`} fill="none">
      {children}
    </g>
  </g>
);

const ScissorModel = () => (
  <Model viewBox="293 168 1016 796" preserveAspectRatio="xMinYMin meet" role="img" aria-label="剪刀曲面">
    <defs>
      <linearGradient id="sheet" x1="0" x2="1">
        <stop offset="0" stopColor="#9bddf8" />
        <stop offset=".5" stopColor="#f4fcff" />
        <stop offset="1" stopColor="#9bddf8" />
      </linearGradient>
      <linearGradient id="sideStart" gradientUnits="userSpaceOnUse" x1="450" y1="640" x2="640" y2="700">
        <stop offset="0" stopColor="#e89600" />
        <stop offset="1" stopColor="#e89600" stopOpacity="0" />
      </linearGradient>
      <linearGradient id="tube" gradientUnits="userSpaceOnUse" x1="955" y1="762" x2="938" y2="802">
        <stop offset="0" stopColor="#d48a00" />
        <stop offset="1" stopColor="#7d5000" />
      </linearGradient>
      <filter id="soft" filterUnits="userSpaceOnUse" x="293" y="300" width="1016" height="664">
        <feGaussianBlur stdDeviation="7" />
      </filter>
      <filter id="wide" filterUnits="userSpaceOnUse" x="293" y="300" width="1016" height="664">
        <feGaussianBlur stdDeviation="14" />
      </filter>
    </defs>

    <g shapeRendering="crispEdges" fill={colors.datum} fillOpacity=".075" stroke="none">
      <path d="M567 374 1295 626 1150 930 423 655z" />
      <path d="M541 339 583 380 440 668 390 640z" />
      <path d="M1232 578 1272 618 1128 912 1075 882z" />
      <path d="M363 628 1105 883 1153 933 414 680z" />
    </g>
    <g shapeRendering="crispEdges" stroke={colors.datum} fill="none">
      <path d="M423 655 567 374 1295 626 1146 930M390 640 541 339 583 380 440 668M1128 912 1272 618 1232 578 1075 882 1112 916" />
      {lowerPlanes.map(([x1, y1, x2, y2]) => (
        <path key={`${x1}-${y1}`} d={`M${x1} ${y1}L${x2} ${y2}`} />
      ))}
      <path d="M363 628 414 680M374 633 414 676M1105 883 1153 933M1117 891 1148 925M548 690 596 742M736 758 784 808M922 821 968 869" />
    </g>

    <path d="M477 540 495 544 472 592 462 613 441 628 455 672 436 655C440 620 455 580 477 540z" fill="#7a5000" />
    <path d="M507 548Q488 585 479 605" stroke={colors.blue} fill="none" />

    <Shaded id="blade" d={bladePath} base="#ffa800">
      <path d="M800 440 870 505 925 570" stroke="#a66c00" strokeWidth="44" filter="url(#wide)" />
      <path d={outerEdge} stroke="#704700" strokeWidth="20" filter="url(#soft)" />
      <path d="M1100 828 1198 762" stroke="#f09a00" strokeWidth="20" filter="url(#soft)" />
    </Shaded>
    <Shaded id="ring" d={ringPath} base="#f49e00">
      <path d={ringBelly} stroke="#7d5000" strokeWidth="52" strokeOpacity=".85" filter="url(#wide)" />
      <path d={holeEdge} stroke="#6e4500" strokeWidth="9" filter="url(#soft)" />
      <path d="M650 403Q715 395 785 432" stroke="#8a5800" strokeWidth="12" filter="url(#soft)" />
      <path d="M477 540 505 497 530 470" stroke="#ffc828" strokeWidth="8" filter="url(#soft)" />
    </Shaded>
    <Shaded id="tubeClip" d={tubePath} base="url(#tube)">
      <path d="M945 800 1006 820" stroke="#6e4500" strokeWidth="18" filter="url(#soft)" />
    </Shaded>
    <Shaded id="lowerSide" d={lowerSide} base="#b67a00">
      <path d={lowerSide} fill="url(#sideStart)" />
      <path d="M440 662 562 722 640 748 760 778 840 786 930 784" stroke="#6e4500" strokeWidth="36" filter="url(#soft)" />
    </Shaded>
    <Shaded id="lowerTop" d={lowerTop} base="#ffa600">
      <path d="M548 590 575 636 608 668 655 690 690 692" stroke="#6e4500" strokeWidth="26" filter="url(#soft)" />
      <path d="M560 600 590 655 650 695 700 700" stroke="#c48200" strokeWidth="40" strokeOpacity=".7" filter="url(#wide)" />
      <path d="M690 692 760 686 820 656" stroke="#8a5800" strokeWidth="5" filter="url(#soft)" />
      <path d="M886 715 912 748" stroke="#ffd830" strokeWidth="14" filter="url(#soft)" />
    </Shaded>
    <path d="M857 637C862 665 870 695 890 722L907 745 918 746C895 722 880 695 874 675L863 620z" fill="#c88400" />

    <g shapeRendering="crispEdges" fill="none" stroke={colors.orange}>
      <path d={holeEdge} />
      <path d={outerEdge} />
      <path d={`M733 411${ridge}`} />
      <path d="M477 540C482 528 490 515 505 497 528 472 545 458 573 439" />
      <path d="M477 540C460 575 447 605 441 625L436 655M477 540C508 546 530 555 553 569M493 544 462 613M441 625C463 610 485 600 510 594 525 591 540 591 551 599L575 641 608 671C650 702 730 705 780 682L863 640" />
      <path d="M441 625C530 668 600 695 668 711 735 728 830 740 918 746M454 660C500 690 530 706 562 718 600 735 690 763 760 773 800 781 860 784 915 781L967 773" />
      <path d="M505 515C540 480 570 455 622 431 660 415 700 410 733 418M622 418Q630 450 647 475M810 467Q802 495 808 515M847 530Q890 515 906 532M500 654Q540 632 575 641M539 670Q544 700 561 717M668 711Q690 682 709 698M668 711Q675 742 697 763M824 737Q830 760 846 781M828 656Q840 700 860 741M540 556 548 600M553 569 542 617" />
      <path d="M875 678C862 700 885 730 887 740 895 760 905 770 917 781M918 746Q922 765 933 779M893 710 950 658C975 636 995 632 1007 639M1013 796C1050 750 1075 705 1107 714M863 620Q880 690 918 746" />
      <path d="M918 746C940 761 965 774 991 786L1013 796 1057 814 1105 832 1138 843M1198 762C1176 776 1158 812 1138 843M991 786Q990 800 1005 819L941 795 917 781M1005 819 1073 838 1121 849 1154 854M1057 814 1073 838M1105 832 1121 849M1137 843 1155 848M1198 762 1269 787M422 613 441 625 454 660" />
    </g>

    <g shapeRendering="crispEdges" stroke={colors.datum} fill="none" opacity=".75">
      <path d="M665 408 837 468M567 374 423 655M583 380 440 668M1232 578 1075 882M548 690 670 732M560 700 760 768M600 706 790 772M736 758 765 788" />
    </g>
    <g shapeRendering="crispEdges" fill="none" stroke={colors.blue}>
      <path d="M993 797Q1080 840 1168 861M390 641 430 670 452 690 475 695M398 642 425 660M440 655 470 682M454 665 462 690" />
      {crosses.map(([x, y]) => (
        <path key={`${x}-${y}`} d={`M${x - 5} ${y - 5}l10 10M${x + 5} ${y - 5}l-10 10`} />
      ))}
      {squares.map(([x, y]) => (
        <rect key={x} x={x - 5} y={y - 5} width="10" height="10" />
      ))}
      {circles.map(([x, y]) => (
        <circle key={x} cx={x} cy={y} r="4.500" />
      ))}
    </g>
    <g fill="#0000e0">
      {dots.map(([x, y]) => (
        <circle key={`${x}-${y}`} cx={x} cy={y} r="2.200" />
      ))}
    </g>
    {[[423, 656], [1144, 835]].map(([x, y]) => (
      <g key={x} stroke="#a00000" strokeWidth="1.300" fill="#b07820">
        <path d={`M${x - 3} ${y - 3}h6v6h-6zM${x - 5} ${y - 5}l10 10M${x + 5} ${y - 5}l-10 10`} />
      </g>
    ))}

    <g shapeRendering="crispEdges" fill="none">
      <path d="M834 633 825 623" stroke="#2cff2c" />
      <path d="M834 633 853 639" stroke="#ff3030" />
      <path d="M834 633 824 653M427 678 413 706" stroke="#30f8ff" />
      <path d="M427 678 413 664" stroke="#2cff2c" strokeWidth="2" />
      <path d="M427 678 452 686" stroke="#ff3030" strokeWidth="2" />
    </g>
    <circle cx="825" cy="623" r="3" fill="#2cff2c" />
    <circle cx="853" cy="639" r="2.500" fill="#ff3030" />
    <circle cx="824" cy="653" r="2" fill="#30f8ff" />
    <path d="M412 706 414 696 419 698z" fill="#30f8ff" />

    <StrokeText x="375" y="634">TOP</StrokeText>
    <StrokeText x="434" y="661">PNT0</StrokeText>
    <StrokeText x="433" y="675">START_PART</StrokeText>
    <StrokeText x="428" y="684">FRONT</StrokeText>
    <StrokeText x="1153" y="840">PNT1</StrokeText>
    <StrokeText x="1296" y="626">SIDE</StrokeText>
    <StrokeText x="1116" y="924">DTM1</StrokeText>
    <StrokeText x="456" y="701" $color="#ff3030">X</StrokeText>
    <StrokeText x="402" y="661" $color="#2cff2c">Y</StrokeText>
    <StrokeText x="400" y="720" $color="#30f8ff">Z</StrokeText>
    <ModeText x="301" y="878">插入模式</ModeText>

    <LogoText x="1122" y="934" $color="#ff6a3a">野火</LogoText>
    <LogoText x="1208" y="934" $color="#111">论坛</LogoText>
    <path d="M1190 921c16-4 22-20 3-41 7 15 5 22 0 28 0-8-3-13-3-13 0 12-5 19-2 24z" fill="#ff6434" />
    <SiteText x="1125" y="952">www.proewildfire.cn</SiteText>
  </Model>
);

/* ---------- pieces ---------- */

const Scrollbar = ({ before, thumb, after, horizontal }) => (
  <ScrollTrack $horizontal={horizontal}>
    <ScrollEnd aria-label={horizontal ? "向左" : "向上"}>
      <Caret color="#8d9092" dir={horizontal ? "left" : "up"} />
    </ScrollEnd>
    <ScrollGap $size={before} />
    <ScrollThumb $size={thumb} />
    <ScrollGap $size={after} />
    <ScrollEnd aria-label={horizontal ? "向右" : "向下"}>
      <Caret color="#8d9092" dir={horizontal ? "right" : "down"} />
    </ScrollEnd>
  </ScrollTrack>
);

const Item = ({ icon, text, fresh, hidden, selected, expandable, end }) => (
  <Row $hidden={hidden}>
    <Guide $tick={!expandable && !end} $end={end}>
      {expandable && <ExpandMark />}
    </Guide>
    {icon}
    {fresh ? (
      <>
        <FreshMark><Star /></FreshMark>
        <span>&#8202;{text}</span>
      </>
    ) : (
      <Label $selected={selected}>{text}</Label>
    )}
  </Row>
);

const menuTabs = ["模型", "分析", "实时仿真", "注释", "工具", "视图", "柔性建模", "应用程序"];
const curveFeatures = ["CF-93", "CF-94", "CF-95", "CF-97", "CF-98", "CF-99", "CF-100", "CF-101"];
const surfaceFeatures = ["SF-79", "SF-88", "SF-96", "SF-102"];
const layerItems = [
  ["F7(拉伸_1)", <Block key="i" />],
  ["F8(拉伸_2)", <Block key="i" />],
  ["F-1(样式_3)", <Surface key="i" />],
  ["面组:F-1-172", <Quilt key="i" />],
];

const TopBar = () => (
  <TitleBar>
    <QuickAccess>
      <Svg stroke="#2e86a8">
        <path d="m1 4 3-3h11v11l-3 3H1z" fill="#4cb4dc" />
        <path d="M1 4h11v11H1z" fill="#a5e4fb" />
      </Svg>
      <Brand>creo<small>·</small></Brand>
      <IconButton aria-label="新建">
        <Svg stroke="#b4b8b8"><path d="M2 1h8l4 4v10H2zM10 1v4h4" fill="#eceeee" /></Svg>
      </IconButton>
      <IconButton aria-label="打开">
        <Svg stroke="#a5a9a9"><path d="M1 15V5h5l1 2h6v2M1 15l3-6h11l-3 6z" fill="#dfe1e1" /><path d="M8 4c1-3 4-3 6-1m0-3v3h-3" /></Svg>
      </IconButton>
      <IconButton aria-label="保存">
        <Svg stroke="#9fa3a3"><path d="M1 1h14v14H1z" fill="#b0b4b4" /><path d="M4 1h8v5H4zM5 10h7v5H5z" fill="#e4e7e7" /></Svg>
      </IconButton>
      <IconButton aria-label="撤消">
        <Svg stroke="#a0a4a4" strokeWidth="2"><path d="M3 7c4-5 11-3 11 1 0 3-3 5-5 5" /><path d="M1 4v7h7z" fill="#a0a4a4" stroke="none" /></Svg>
      </IconButton>
      <DropButton aria-label="撤消列表"><Caret color="#a0a4a4" /></DropButton>
      <IconButton aria-label="重做">
        <Svg stroke="#a0a4a4" strokeWidth="2"><path d="M13 7C9 2 2 4 2 8c0 3 3 5 5 5" /><path d="M15 4v7H8z" fill="#a0a4a4" stroke="none" /></Svg>
      </IconButton>
      <DropButton aria-label="重做列表"><Caret color="#a0a4a4" /></DropButton>
      <IconButton aria-label="重新生成">
        <Svg stroke="#a0a4a4"><path d="M1 2h3v3H1zM1 7h3v3H1zM1 12h3v3H1zM6 11h7M6 14h8M7 6c0-4 2-4 3-3m0-2v3H7M14 2c1 3-1 5-3 5m1 1V5h3" /></Svg>
      </IconButton>
      <IconButton aria-label="窗口">
        <Svg stroke="#666a6c"><path d="M6 1.500h9v6H6zM1 4.500h6v4H1zM2 11h5v3H2z" fill="#fff" /><path d="M5 5.500h9v6H5z" fill="#fff" stroke="#1a6c94" strokeWidth="1.600" /></Svg>
      </IconButton>
      <DropButton aria-label="窗口列表"><Caret /></DropButton>
      <IconButton aria-label="关闭">
        <Svg w={14} stroke="#4a4d4f" strokeWidth="4"><path d="m3 3 8 8m0-8-8 8" /><path d="m3 3 8 8m0-8-8 8" stroke="#fff" strokeWidth="2" /></Svg>
      </IconButton>
      <Divider $h={24} />
      <IconButton aria-label="自定义">
        <Svg w={9} h={10} stroke="none" fill="#4a4d4f"><path d="M0 1h9v1H0zM0 4h9L4.500 9z" /></Svg>
      </IconButton>
    </QuickAccess>
    <Title>剪刀曲面 (活动的) D:\剪刀曲面.prt.1 - Creo Parametric</Title>
    <WindowButtons>
      <Svg w={9} h={11} stroke="#666a6c" strokeWidth="2"><path d="M0 9h9" /></Svg>
      <Svg w={10} h={11}><path d="M.5 1.500h9v8h-9z" /><path d="M0 2h10" strokeWidth="2" /></Svg>
    </WindowButtons>
  </TitleBar>
);

const Menu = () => (
  <TabBar>
    <Tab $kind="file">文件</Tab>
    {menuTabs.map((name) => (
      <Tab key={name}>{name}</Tab>
    ))}
    <Tab $kind="context">样式</Tab>
    <Tab $kind="active">造型: 曲线编辑</Tab>
    <TabTools>
      <Svg w={12} h={10} stroke="none" fill="#e6eaea"><path d="M.5 5 6 0l5.500 5h-3L6 3 3.500 5z" /></Svg>
      <Svg w={12} h={12} stroke="#fff" strokeWidth="1.800"><circle cx="7" cy="5" r="3.200" /><path d="M4.500 7.500 1 11" /></Svg>
      <Svg w={13} h={12} stroke="none" fill="#fff"><path d="M0 4 7 1l6 3-6 3zM3 6l4 2 4-2v3c-2 2-6 2-8 0zM1 4v5h1V4z" /></Svg>
      <Svg w={7} h={9} stroke="none" fill="#fff"><path d="M0 3h7L3.500 7z" /></Svg>
    </TabTools>
  </TabBar>
);

const CommandRibbon = () => (
  <Ribbon>
    <FeatureMark><StyleMark /></FeatureMark>
    <Dashboard>
      <Groups>
        <Group $w={232}>
          <GroupTitle>曲线</GroupTitle>
          <Collector><Wave dots={false} />30个项</Collector>
        </Group>
        <Group $w={200}>
          <GroupTitle>类型</GroupTitle>
          <TypeRow>
            <TypeButton><FreeCurve />自由曲线</TypeButton>
            <TypeButton><PlanarCurve />平面曲线</TypeButton>
            <TypeButton disabled><CurveOnSurface />曲面上的<br />曲线</TypeButton>
          </TypeRow>
        </Group>
        <Group $w={184}>
          <GroupTitle>设置</GroupTitle>
          <FieldRow>
            <ToolButton><ControlPoints />控制点</ToolButton>
            <DegreeLabel>
              度:
              <Spinner>
                <input type="text" defaultValue="" />
                <Svg w={14} h={24} stroke="none" fill="#55595b"><path d="m8 4 2.500 4h-5zM8 20l2.500-4h-5z" /></Svg>
              </Spinner>
            </DegreeLabel>
          </FieldRow>
          <FieldRow>
            <ToolButton disabled><Periodic />周期曲线</ToolButton>
            <ToolButton $on><ShowOriginal />显示原始</ToolButton>
          </FieldRow>
        </Group>
        <Group $w={144} $off>
          <GroupTitle>对称</GroupTitle>
          <FieldRow><ToolButton disabled><Mirror />对称曲线</ToolButton></FieldRow>
          <FieldRow><PlaneLabel>平面:<input type="text" disabled /></PlaneLabel></FieldRow>
        </Group>
        <Group $w={86} $strong>
          <GroupTitle>操作</GroupTitle>
          <FieldRow><ToolButton disabled><Smooth />平滑</ToolButton></FieldRow>
          <FieldRow><ToolButton disabled><Simplify />简化</ToolButton></FieldRow>
        </Group>
        <ActionCell $w={69}>
          <IconButton aria-label="暂停">
            <Svg w={24} h={22} stroke="none" fill="#404244"><path d="M1 0h8v21H1zM15 0h8v21h-8z" /></Svg>
          </IconButton>
        </ActionCell>
        <ActionCell $w={108} $last>
          <ActionButton>
            <Svg w={28} h={24}><path d="m1 11 7-1 3 4L21 2l6-1-17 19z" fill="#2f9a62" stroke="none" /><path d="m1 11 7-1 3 4L21 2h7" stroke="#c8e800" strokeWidth="1.500" /><path d="m2 12 8 8L27 3" stroke="#1a5c34" /></Svg>
            确定
          </ActionButton>
          <ActionButton>
            <Svg w={20} h={24} stroke="#444648" strokeWidth="4"><path d="m2 5 16 14m0-14L2 19" /></Svg>
            取消
          </ActionButton>
        </ActionCell>
      </Groups>
      <SubTabs>
        <SubTab $w={54} $blank aria-label="放置" />
        <SubTab $w={71}>参考</SubTab>
        <SubTab $w={59}>点</SubTab>
        <SubTab $w={71}>相切</SubTab>
        <SubTab $w={71}>选项</SubTab>
      </SubTabs>
    </Dashboard>
    <Help>
      <HelpText>
        <span>编辑曲线。</span>
        <a href="#more">阅读更多...</a>
      </HelpText>
    </Help>
  </Ribbon>
);

const Navigator = () => (
  <Sidebar>
    <SideTabs>
      <SideTab $on aria-label="模型树"><ModelTreeMark /></SideTab>
      <SideTab aria-label="文件夹"><Folders /></SideTab>
    </SideTabs>
    <SideTools>
      <SectionCaret />
      <SideTool $gap={1}><GreenCube /></SideTool>
      <Grip />
      <SideTool $gap={18}><ExpandAll /></SideTool>
      <SideTool $w={20}><CollapseAll /></SideTool>
      <SideTool $gap={4} $on><Columns /></SideTool>
      <SideTool $w={4} />
      <Divider />
      <SideTool $gap={4}><TreeFilter /></SideTool>
      <SideTool><TreeColumns /></SideTool>
      <SideTool $w={4} />
      <Divider />
      <SideTool $gap={4}><TreeList /></SideTool>
      <SideTool $gap={6} aria-label="更多"><Chevrons /></SideTool>
      <SideTool><Sheet /></SideTool>
    </SideTools>
    <Filter>
      <Funnel />
      <FilterBox>
        <input type="text" aria-label="过滤" />
        <Svg w={10} stroke="#989b9d" strokeWidth="1.200"><path d="m1 1 8 8m0-8-8 8" /></Svg>
      </FilterBox>
      <SideTool $w={11}><Caret /></SideTool>
      <SideTool $w={22}>
        <Svg w={11} stroke="#989b9d" strokeWidth="3"><path d="M0 5.500h11M5.500 0v11" /></Svg>
      </SideTool>
    </Filter>
    <Section $h={167}>
      <Tree>
        <TreeInner $scroll={14}>
          <Item icon={<Plane />} text="FRONT" />
          <Item icon={<Csys />} text="START_PART" />
          <Item icon={<Plane />} text="DTM1" />
          <Item icon={<Surface />} text="样式 2" />
          <Item icon={<Block faded />} text="拉伸 1" hidden expandable />
          <Item icon={<Block faded />} text="拉伸 2" hidden expandable />
          <Item icon={<Points />} text="基准点 标识104" />
          <InsertLine />
          <Item icon={<Surface />} text="样式 1" fresh end />
        </TreeInner>
      </Tree>
      <Scrollbar before={51} thumb={81} after={4} />
    </Section>
    <Splitter />
    <SideTools>
      <SectionCaret />
      <SideTool $gap={2}>
        <Svg w={17} stroke="none"><path d="M5 9h11l-4 6H1z" fill="#777b7d" /><path d="M5 5h11l-4 6H1z" fill="#f7fafb" /><path d="M5 5h11l-4 5H1z" fill="#9a9d9f" /><path d="M5 1h11l-4 5H1z" fill="#4ea836" /></Svg>
      </SideTool>
      <Grip />
      <SideTool $gap={20}><ExpandAll /></SideTool>
      <SideTool $w={20}><CollapseAll /></SideTool>
      <SideTool $w={9} />
      <Divider />
      <SideTool $gap={4} $on><LayerEye /></SideTool>
      <SideTool $on><LayerBox /></SideTool>
      <SideTool $on><LayerIsolate /></SideTool>
      <SideTool $gap={11} aria-label="更多"><Chevrons /></SideTool>
      <SideTool $w={20}><LayerSheet /></SideTool>
      <SideTool $w={28}><Sheet /></SideTool>
    </SideTools>
    <ModelPicker>
      <PickArrow aria-label="选择">
        <Svg w={12} h={16} stroke="#999c9e"><path d="M1.500 1v12l3-3 2 5 2-1-2-4h4z" fill="#fff" /></Svg>
      </PickArrow>
      <PickerSelect aria-label="模型" disabled>
        <option>剪刀曲面.PRT</option>
      </PickerSelect>
      <PickCaret><Caret color="#8d9092" /></PickCaret>
    </ModelPicker>
    <Section $h={145}>
      <Tree>
        <Row $h={20} $root><Layers /><Label $gap={8}>层</Label></Row>
        <Row $h={20} $hidden>
          <Guide><ExpandMark open /></Guide>
          <FlatPlane color="#d0c9b6" />
          <Label $gap={8}>隐藏的项</Label>
        </Row>
        {layerItems.map(([text, icon], i) => (
          <Row key={text} $h={20}>
            <Guide $w={20} />
            <Guide $tick={i < 3} $end={i === 3} />
            {icon}
            <Label $gap={8}>{text}</Label>
          </Row>
        ))}
        <Row $h={20}>
          <Guide><ExpandMark /></Guide>
          <FlatPlane />
          <Label $gap={8}>CSYS</Label>
        </Row>
      </Tree>
      <Scrollbar before={0} thumb={46} after={70} />
    </Section>
    <HScrollRow><Scrollbar horizontal before={0} thumb={194} after={38} /></HScrollRow>
    <Splitter />
    <SideTools>
      <SectionCaret />
      <SideTool $gap={1}><Surface fill="#67d24a" edge="#6e8a66" /></SideTool>
      <Grip />
      <SideTool $gap={19}><TreeFilter /></SideTool>
      <SideTool><TreeColumns /></SideTool>
    </SideTools>
    <Section>
      <Tree>
        {curveFeatures.map((name) => (
          <Item key={name} icon={<CurveOnPlane />} text={name} fresh />
        ))}
        {surfaceFeatures.map((name) => (
          <Item key={name} icon={<Surface />} text={name} selected={name === "SF-102"} />
        ))}
        <Item icon={<Surface fill="#fbf3e2" edge="#d8ccb4" />} text="SF-90" hidden end />
      </Tree>
      <Scrollbar before={165} thumb={91} after={0} />
    </Section>
  </Sidebar>
);

const App = () => (
  <Page>
    <GlobalStyle />
    <TopBar />
    <Menu />
    <CommandRibbon />
    <Work>
      <Navigator />
      <Viewport>
        <ScissorModel />
        <GraphicsBar>
          {graphics.map(([label, icon, on, more]) => (
            <GraphicsButton key={label} aria-label={label} $on={on} $more={more}>
              {icon}
            </GraphicsButton>
          ))}
        </GraphicsBar>
      </Viewport>
    </Work>
  </Page>
);

export default App;
